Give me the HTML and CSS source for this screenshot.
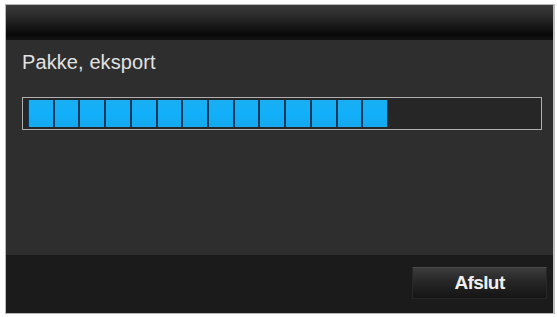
FILE: index.html
```html
<!DOCTYPE html>
<html>
<head>
<meta charset="utf-8">
<link rel="stylesheet" href="styles.css">
</head>
<body>
<div class="dialog">
  <div class="header"></div>
  <div class="content">
    <div class="label">Pakke, eksport</div>
    <div class="bar">
      <div class="fill" style="width: 360px">
        <span class="seg"></span><span class="seg"></span><span class="seg"></span><span class="seg"></span><span class="seg"></span><span class="seg"></span><span class="seg"></span><span class="seg"></span><span class="seg"></span><span class="seg"></span><span class="seg"></span><span class="seg"></span><span class="seg"></span><span class="seg"></span>
      </div>
    </div>
  </div>
  <div class="footer">
    <button class="btn">Afslut</button>
  </div>
</div>
</body>
</html>
```

FILE: styles.css
```css
html, body {
  margin: 0;
  padding: 0;
  background: #ffffff;
}
body {
  padding: 4px 0 0 5px;
  font-family: "Liberation Sans", Arial, sans-serif;
}
.dialog {
  width: 547px;
  height: 308px;
  border: 1px solid #b8b8b8;
  border-right: 2px solid #bdbdbd;
  display: flex;
  flex-direction: column;
  background: #2e2e2e;
}
.header {
  height: 35px;
  flex: none;
  background: linear-gradient(#3a3a3a 0%, #2c2c2c 30%, #141414 65%, #090909 85%, #121212 100%);
}
.content {
  height: 215px;
  flex: none;
  box-sizing: border-box;
  padding: 11px 0 0 16px;
  background: #2e2e2e;
}
.label {
  font-size: 20px;
  line-height: 23px;
  color: #e2e2e2;
  letter-spacing: 0.1px;
}
.bar {
  margin-top: 23px;
  width: 508px;
  height: 29px;
  border: 1px solid #b0b0b0;
  padding: 1px 5px 1px 5px;
  box-sizing: content-box;
  background: #262626;
  display: flex;
  align-items: center;
}
.fill {
  height: 27px;
  display: flex;
  gap: 2px;
  background: #0b3a58;
  padding: 0 1px;
  box-sizing: border-box;
}
.seg {
  flex: 1;
  background: linear-gradient(#19aef2, #12b0fa 50%, #14a8ee);
}
.footer {
  flex: 1;
  background: #1c1b1b;
  display: flex;
  justify-content: flex-end;
  align-items: center;
  padding-right: 6px;
}
.btn {
  width: 135px;
  height: 32px;
  border: 1px solid #262626;
  border-top-color: #4a4a4a;
  background: linear-gradient(#3c3c3c 0%, #262626 45%, #151515 100%);
  color: #f0f0f0;
  font-family: "Liberation Sans", Arial, sans-serif;
  font-weight: bold;
  font-size: 19px;
  letter-spacing: -0.6px;
  padding: 0;
  margin-top: -3px;
}
```
